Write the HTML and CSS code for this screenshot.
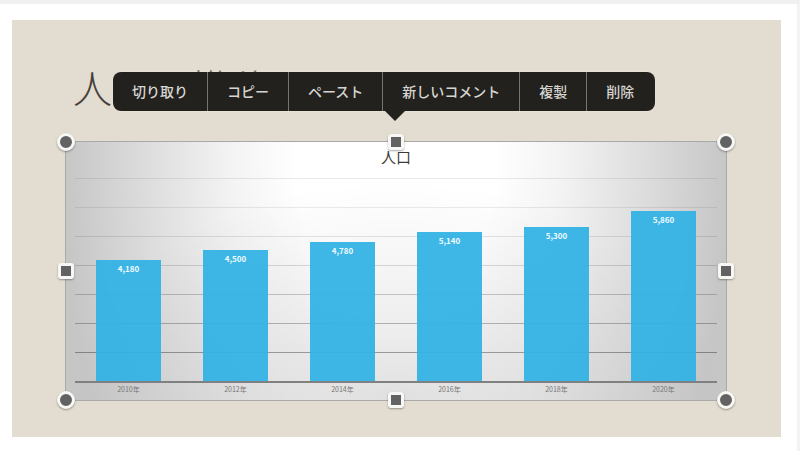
FILE: index.html
```html
<!DOCTYPE html>
<html lang="ja">
<head>
<meta charset="utf-8">
<title>人口の推移</title>
<link rel="stylesheet" href="styles.css">
</head>
<body>
<main class="slide">
  <header class="slide-header">
    <h1 class="slide-title">人口の推移</h1>
    <div class="menu" role="toolbar">
      <button type="button">切り取り</button>
      <button type="button">コピー</button>
      <button type="button">ペースト</button>
      <button type="button">新しいコメント</button>
      <button type="button">複製</button>
      <button type="button">削除</button>
    </div>
  </header>
  <figure class="chart">
    <figcaption class="chart-title">人口</figcaption>
    <div class="plot">
      <div class="gridlines"><i></i><i></i><i></i><i></i><i></i><i></i><i></i></div>
      <div class="bars">
        <div class="bar" style="height:59.7%">4,180</div>
        <div class="bar" style="height:64.3%">4,500</div>
        <div class="bar" style="height:68.3%">4,780</div>
        <div class="bar" style="height:73.4%">5,140</div>
        <div class="bar" style="height:75.7%">5,300</div>
        <div class="bar" style="height:83.7%">5,860</div>
      </div>
    </div>
    <div class="axis">
      <span>2010年</span><span>2012年</span><span>2014年</span><span>2016年</span><span>2018年</span><span>2020年</span>
    </div>
    <span class="handle round top left"></span>
    <span class="handle top center"></span>
    <span class="handle round top right"></span>
    <span class="handle middle left"></span>
    <span class="handle middle right"></span>
    <span class="handle round bottom left"></span>
    <span class="handle bottom center"></span>
    <span class="handle round bottom right"></span>
  </figure>
</main>
</body>
</html>
```
FILE: styles.css
```css
* { box-sizing: border-box; }

body {
  margin: 0;
  min-height: 100vh;
  padding: 16px 16px 12px 12px;
  border-top: 4px solid #f0f0f0;
  border-right: 3px solid #f3f3f3;
  background: #fff;
  font-family: "Noto Sans CJK JP", sans-serif;
}

.slide {
  padding: 42px 54px 36px 53px;
  background: #e3dcd0;
}

.slide-header {
  position: relative;
  height: 79px;
}

.slide-title {
  margin: 0;
  padding-left: 8px;
  font-size: 39px;
  font-weight: 300;
  line-height: 48px;
  color: #45423b;
}

.menu {
  position: absolute;
  top: 10px;
  left: 48px;
  display: flex;
  width: max-content;
  height: 39px;
  padding-right: 2px;
  border-radius: 8px;
  background: #22211d;
  box-shadow: 0 0 2px #f4eee3;
  white-space: nowrap;
}

.menu::after {
  content: "";
  position: absolute;
  top: 100%;
  left: 52%;
  margin-left: -10px;
  border: 10px solid transparent;
  border-top-color: #22211d;
  border-bottom: 0;
}

.menu button {
  padding: 0 19px 2px;
  border: 0;
  border-right: 1px solid #77756f;
  background: none;
  color: #d6d5d1;
  font: 500 14px/36px "Noto Sans CJK JP", sans-serif;
}

.menu button:last-child { border-right: 0; }

.chart {
  position: relative;
  margin: 0;
  padding: 6px 9px 4px;
  border: 1px solid #a9a9a9;
  background:
    radial-gradient(ellipse 50% 85% at 50% 100%, rgba(0, 0, 0, 0.1), rgba(0, 0, 0, 0)),
    radial-gradient(ellipse 60% 300% at 50% 0, #fff 25%, #f3f3f3 42%, #e0e0e0 60%, #c6c6c6 84%);
}

.chart-title {
  height: 30px;
  font-size: 15px;
  line-height: 18px;
  text-align: center;
  color: #3c3c3c;
}

.plot {
  display: grid;
  height: 205px;
  border-bottom: 2px solid #808080;
}

.gridlines,
.bars { grid-area: 1 / 1; }

.gridlines {
  display: grid;
  grid-template-rows: repeat(7, 1fr);
}

.gridlines i { border-top: 1px solid rgba(0, 0, 0, 0.08); }
.gridlines i:nth-child(3) { border-color: rgba(0, 0, 0, 0.1); }
.gridlines i:nth-child(4) { border-color: rgba(0, 0, 0, 0.14); }
.gridlines i:nth-child(5) { border-color: rgba(0, 0, 0, 0.2); }
.gridlines i:nth-child(6) { border-color: rgba(0, 0, 0, 0.26); }
.gridlines i:nth-child(7) { border-color: rgba(0, 0, 0, 0.34); }

.bars,
.axis {
  display: grid;
  grid-template-columns: repeat(6, 1fr);
  justify-items: center;
}

.bars { align-items: end; }

.bar {
  width: 60%;
  padding-top: 3px;
  background: rgba(50, 178, 230, 0.94);
  color: #effaff;
  font-size: 8px;
  font-weight: 700;
  line-height: 12px;
  text-align: center;
}

.axis {
  color: #777;
  font-size: 7px;
  line-height: 13px;
}

.handle {
  position: absolute;
  width: 16px;
  height: 16px;
  margin: -8px;
  border: 3px solid #f7f7f5;
  border-radius: 3px;
  background: #626262;
  box-shadow: 0 1px 2px rgba(0, 0, 0, 0.35);
}

.round {
  width: 18px;
  height: 18px;
  margin: -9px;
  border-radius: 50%;
}

.top { top: 0; }
.middle { top: 50%; }
.bottom { bottom: 0; }
.left { left: 0; }
.center { left: 50%; }
.right { right: 0; }
```
